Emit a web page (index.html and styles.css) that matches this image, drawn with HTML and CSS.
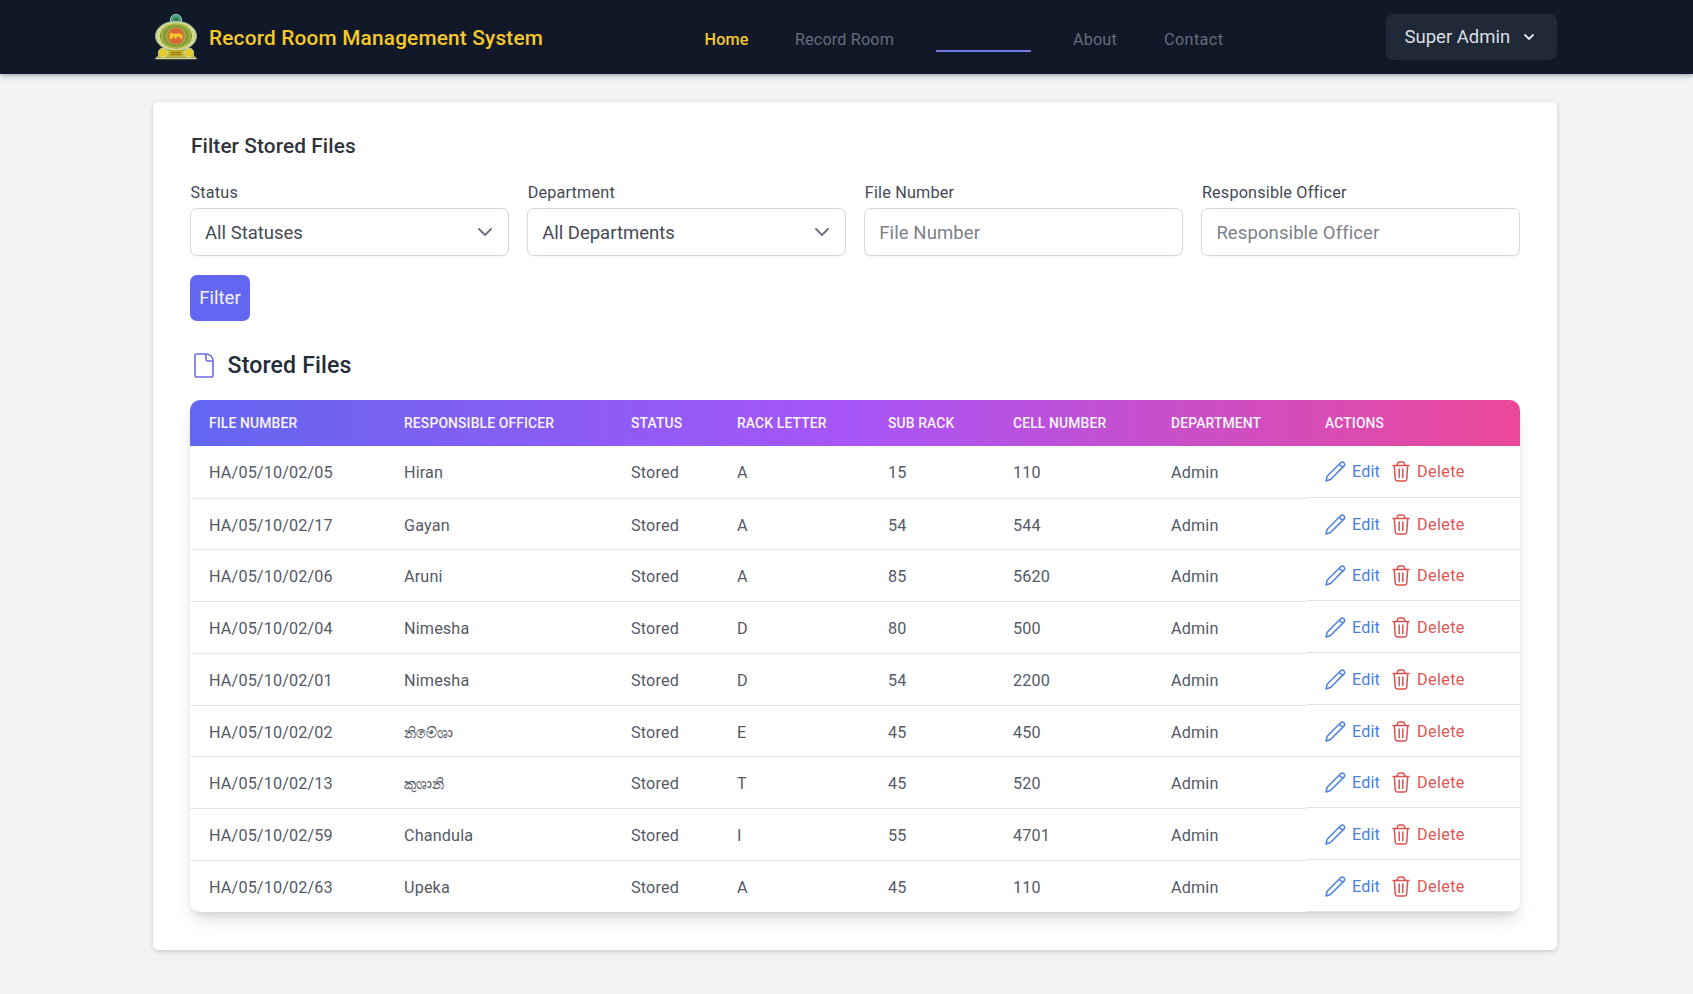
FILE: index.html
```html
<!DOCTYPE html>
<html lang="en">
<head>
<meta charset="utf-8">
<title>Record Room Management System</title>
<link rel="stylesheet" href="styles.css">
</head>
<body>
<svg class="sprite" aria-hidden="true">
  <symbol id="pencil" viewBox="0 0 21 21"><path d="M1 20l1.200-4.800L15.600 1.800a2.200 2.200 0 0 1 3.300 0 2.200 2.200 0 0 1 0 3.300L5.500 18.500zM14.300 3.200l3.200 3.200"/></symbol>
  <symbol id="trash" viewBox="0 0 18 21"><path d="M1 4.600h16M2.300 4.800l1 13.400c.1 1.100.7 1.800 1.900 1.800h7.600c1.200 0 1.800-.7 1.900-1.800l1-13.400M5 4.300l.8-2.200C6 1.400 6.500 1 7.200 1h3.600c.7 0 1.200.4 1.400 1.100l.8 2.200M7.200 8v8.500M10.800 8v8.500"/></symbol>
</svg>
<header class="topbar">
  <div class="topbar-inner">
    <a class="brand">
      <svg class="emblem" viewBox="0 0 44 46">
        <circle cx="22" cy="6" r="5.700" fill="#4f9a85" stroke="#9cc9a8"/>
        <circle cx="22" cy="6" r="2.800" fill="#2f7a52"/>
        <path d="M3 43l3-5 8-5h16l8 5 3 5z" fill="#c3bc3f"/>
        <ellipse cx="22" cy="22" rx="20.500" ry="14.800" fill="#d3d78c" stroke="#8fb9a0"/>
        <ellipse cx="22" cy="22" rx="16" ry="12.500" fill="#7f9a35"/>
        <ellipse cx="22" cy="22" rx="14" ry="11.500" fill="none" stroke="#d5c24b" stroke-width="1.500" stroke-dasharray="1.500 1"/>
        <ellipse cx="22" cy="22" rx="10.500" ry="9.500" fill="#a3a04b"/>
        <circle cx="22" cy="22" r="8" fill="#d9662c"/>
        <path d="M15.500 25v-5l2-1.500 1.500 1h7l2.500 1.200V25h-2v-2h-4v2h-1.500v-2h-2v2z" fill="#f4c531"/>
        <circle cx="9" cy="38.800" r="4.600" fill="#e3c92c" stroke="#cdd699"/>
        <circle cx="35" cy="38.800" r="4.600" fill="#e3c92c" stroke="#cdd699"/>
        <path d="M15 36h14l-1.500 6h-11z" fill="#c9a91d"/><path d="M17 38.500h10M17 40.500h10" stroke="#7d8124"/>
        <path d="M1.500 44.300h41" stroke="#d3d78c" stroke-width="2"/>
      </svg>
      <span class="brand-name">Record Room Management System</span>
    </a>
    <nav class="nav">
      <a class="nav-link nav-home">Home</a>
      <a class="nav-link nav-room">Record Room</a>
      <a class="nav-link nav-active"></a>
      <a class="nav-link nav-about">About</a>
      <a class="nav-link nav-contact">Contact</a>
    </nav>
    <button class="user">Super Admin
      <svg class="user-chevron" viewBox="0 0 10 7"><path d="M1 1l4 4 4-4"/></svg>
    </button>
  </div>
</header>
<main class="card">
  <h2 class="filter-title">Filter Stored Files</h2>
  <form class="filters">
    <label class="field"><span class="label">Status</span>
      <span class="control">All Statuses<svg class="chevron" viewBox="0 0 14 9"><path d="M1 1l6 6 6-6"/></svg></span></label>
    <label class="field"><span class="label">Department</span>
      <span class="control">All Departments<svg class="chevron" viewBox="0 0 14 9"><path d="M1 1l6 6 6-6"/></svg></span></label>
    <label class="field"><span class="label">File Number</span>
      <input class="control" placeholder="File Number"></label>
    <label class="field"><span class="label">Responsible Officer</span>
      <input class="control" placeholder="Responsible Officer"></label>
  </form>
  <button class="filter-btn">Filter</button>
  <h3 class="list-title">
    <svg class="file-icon" viewBox="0 0 20 25"><path d="M2.500 1H12c4 0 7 3 7 7v14.500a1.500 1.500 0 0 1-1.500 1.500h-15A1.500 1.500 0 0 1 1 22.500v-20A1.500 1.500 0 0 1 2.500 1zM12 1v5.500A1.500 1.500 0 0 0 13.500 8H19"/></svg>
    Stored Files
  </h3>
  <table class="files">
    <thead><tr class="head-row"><th>File Number</th><th>Responsible Officer</th><th>Status</th><th>Rack Letter</th><th>Sub Rack</th><th>Cell Number</th><th>Department</th><th>Actions</th></tr></thead>
    <tbody id="rows"></tbody>
  </table>
</main>
<script src="app.js"></script>
</body>
</html>
```
FILE: app.js
```js
const files = [
  ["HA/05/10/02/05", "Hiran", "A", "15", "110"],
  ["HA/05/10/02/17", "Gayan", "A", "54", "544"],
  ["HA/05/10/02/06", "Aruni", "A", "85", "5620"],
  ["HA/05/10/02/04", "Nimesha", "D", "80", "500"],
  ["HA/05/10/02/01", "Nimesha", "D", "54", "2200"],
  ["HA/05/10/02/02", "නිමේශා", "E", "45", "450"],
  ["HA/05/10/02/13", "කුශානි", "T", "45", "520"],
  ["HA/05/10/02/59", "Chandula", "I", "55", "4701"],
  ["HA/05/10/02/63", "Upeka", "A", "45", "110"],
];

document.getElementById("rows").innerHTML = files.map(([number, officer, rack, sub, cell]) => `
  <tr class="row">
    <td>${number}</td>
    <td><span class="${/[\u0d80-\u0dff]/.test(officer) ? "sinhala" : "latin"}">${officer}</span></td>
    <td>Stored</td><td>${rack}</td><td>${sub}</td><td>${cell}</td><td>Admin</td>
    <td class="actions">
      <a class="action edit"><svg class="pencil"><use href="#pencil"/></svg>Edit</a>
      <a class="action delete"><svg class="trash"><use href="#trash"/></svg>Delete</a>
    </td>
  </tr>`).join("");
```
FILE: styles.css
```css
* { box-sizing: border-box; }
body { margin: 0; min-height: 994px; background: #f2f3f5; font-family: Roboto, "Noto Sans", sans-serif; color: #374151; }
.sprite { display: none; }
svg { fill: none; flex: none; }

.topbar { height: 74px; background: #111827; box-shadow: 0 1px 4px rgba(17, 24, 39, .3), 0 3px 7px rgba(17, 24, 39, .1); }
.topbar-inner { display: flex; align-items: center; width: 1404px; height: 74px; margin-left: 153px; }
.brand { display: flex; align-items: center; width: 551.5px; padding-left: 1px; }
.emblem { width: 44px; height: 46px; }
.brand-name { margin-left: 11px; padding-top: 1px; font-size: 20.8px; font-weight: 500; letter-spacing: .19px; color: #f5c92e; white-space: nowrap; }
.nav { display: flex; align-items: center; padding-top: 3px; }
.nav-link { height: 27px; line-height: 29px; font-size: 16.2px; letter-spacing: .15px; color: #666d7b; white-space: nowrap; }
.nav-home { width: 90.5px; color: #f5c92e; font-weight: 500; }
.nav-room { width: 140.5px; }
.nav-active { width: 95.5px; height: 27px; margin-right: 42px; border-bottom: 2px solid #747be0; }
.nav-about { width: 91px; }
.nav-contact { letter-spacing: .4px; }
.user { display: flex; align-items: center; width: 171.5px; height: 46px; margin-left: auto; padding: 0 0 0 19px; border: 0; border-radius: 7px; background: #1f2937; color: #dcdfe4; font: 400 18.5px Roboto, sans-serif; }
.user-chevron { width: 10px; height: 7px; margin-left: 14px; stroke: #e5e7eb; stroke-width: 1.8; stroke-linecap: round; }

.card { width: 1404px; height: 848px; margin: 27.5px 0 0 153px; padding: 28.5px 37px 0; border-radius: 5px; background: #fff; box-shadow: 0 1px 4px rgba(0, 0, 0, .13), 0 3px 6px rgba(0, 0, 0, .05); }
.filter-title { height: 32px; margin: 0; padding-left: 1px; line-height: 32px; font-size: 20.8px; font-weight: 500; color: #30333a; letter-spacing: .1px; }
.filters { display: grid; grid-template-columns: repeat(4, 1fr); gap: 18.5px; margin-top: 18px; }
.field { display: block; }
.label { display: block; height: 28px; padding-left: .5px; line-height: 25px; font-size: 16.2px; letter-spacing: .2px; color: #434956; }
.control { display: flex; align-items: center; justify-content: space-between; width: 100%; height: 48px; padding: 1px 16px 0 14px; border: 1px solid #d5d8dd; border-radius: 7px; background: #fff; box-shadow: 0 1px 2px rgba(0, 0, 0, .05); color: #444a55; font: 400 18.5px Roboto, sans-serif; }
.control::placeholder { color: #7b818a; opacity: 1; letter-spacing: .1px; }
.chevron { width: 14px; height: 9px; stroke: #6b7280; stroke-width: 1.9; stroke-linecap: round; stroke-linejoin: round; }
.filter-btn { display: block; width: 60px; height: 46px; margin-top: 18.5px; padding: 1px 0 0; border: 0; border-radius: 7px; background: #6366f1; color: #f5f5ff; font: 400 18.5px Roboto, sans-serif; }
.list-title { display: flex; align-items: center; height: 36px; margin: 27px 0 0; padding-left: 4px; font-size: 23.1px; font-weight: 500; color: #252c3b; letter-spacing: .15px; }
.file-icon { width: 20px; height: 25px; margin-right: 13.5px; stroke: #6b6de0; stroke-width: 1.6; stroke-linejoin: round; }

.files { display: block; width: 1330px; margin-top: 16px; border-radius: 10px; overflow: hidden; background: #fff; box-shadow: 0 11px 17px -3px rgba(0, 0, 0, .12), 0 4px 7px -3px rgba(0, 0, 0, .12); }
.files thead, .files tbody { display: block; }
.head-row, .row { display: grid; grid-template-columns: 195px 227px 106px 151px 125px 158px 154px 214px; }
.head-row { height: 46px; background: linear-gradient(90deg, #6366f1, #a855f7 50%, #ec4899); }
.head-row th { padding: 0 0 0 19px; line-height: 46px; text-align: left; text-transform: uppercase; white-space: nowrap; font-size: 13.9px; font-weight: 500; letter-spacing: .13px; color: #f8f5ff; }
.row { height: 51.8px; }
.row td { height: 51.8px; padding: 1px 0 0 19px; line-height: 51px; border-bottom: 1.5px solid #e2e4e8; font-size: 16.2px; letter-spacing: .15px; color: #555a67; white-space: nowrap; }
.row:first-child { height: 53px; }
.row:first-child td { height: 53px; }
.row:last-child { height: 51px; }
.row:last-child td { height: 51px; border-bottom: 0; }
.row .actions, .row:first-child .actions { display: flex; align-items: center; height: 51px; padding-top: 1px; line-height: 51px; }
.row:first-child .actions { height: 52px; }
.row:last-child .actions { height: 50.5px; border-bottom: 1px solid #e2e4e8; }
.action { display: flex; align-items: center; }
.edit { color: #4a80dc; margin-right: 12px; }
.delete { color: #e05555; letter-spacing: .35px; }
.pencil { width: 21px; height: 21px; margin-right: 6px; stroke: #4d82df; stroke-width: 1.5; stroke-linejoin: round; }
.trash { width: 18px; height: 21px; margin-right: 7px; stroke: #df5050; stroke-width: 1.5; stroke-linecap: round; stroke-linejoin: round; }
.sinhala { font-size: 15.2px; -webkit-text-stroke: .25px currentColor; }
```
